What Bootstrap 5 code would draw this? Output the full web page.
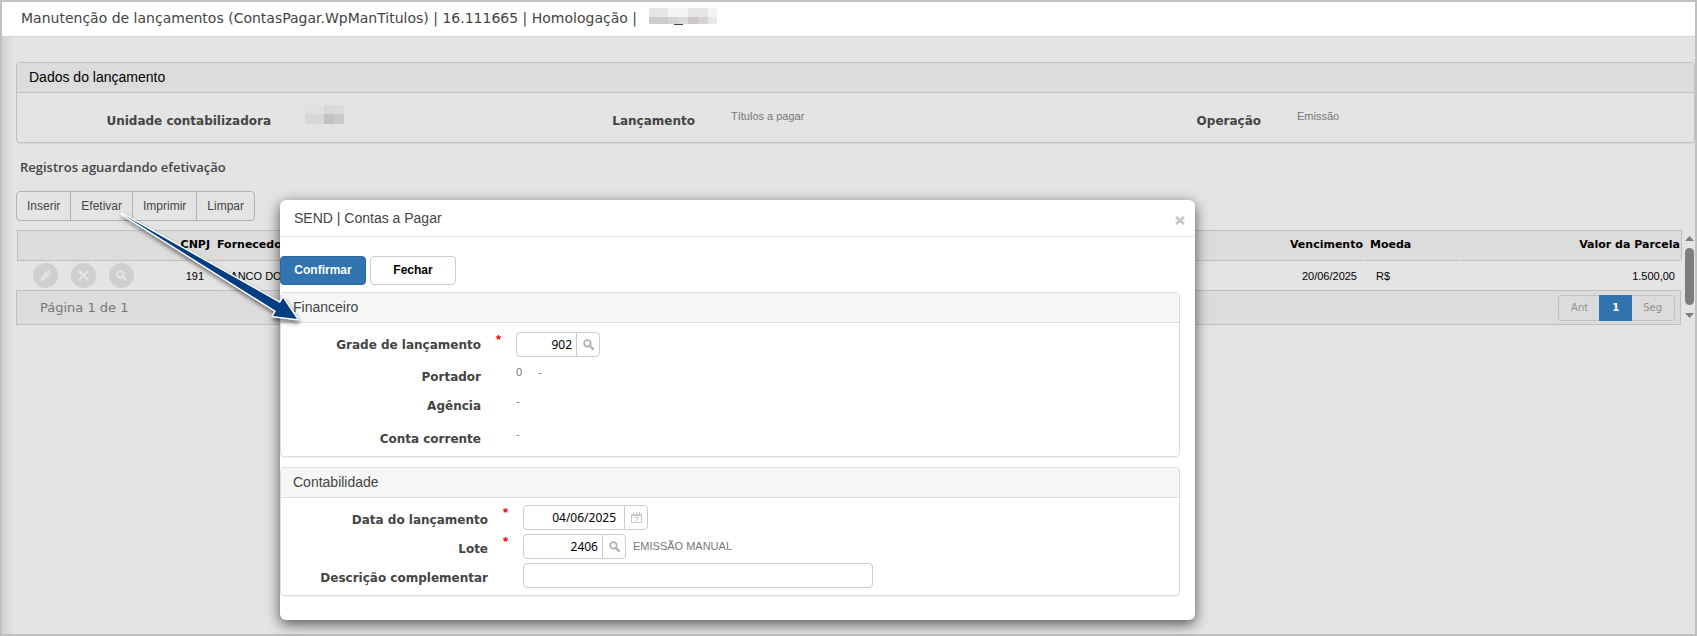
<!DOCTYPE html>
<html lang="pt-BR">
<head>
<meta charset="utf-8">
<meta name="viewport" content="width=device-width, initial-scale=1">
<title>Manutenção de lançamentos</title>
<link rel="stylesheet" href="https://cdn.jsdelivr.net/npm/bootstrap@5.3.0/dist/css/bootstrap.min.css">
<style>
:root { --verd: "DejaVu Sans", sans-serif; --arial: "Liberation Sans", sans-serif; --blue: #3174af; }
body { font: 12px/16px var(--arial); color: #444; background: #e4e4e4; }
.app-frame { min-height: 100vh; border: 2px solid #c0c0c0; background: linear-gradient(90deg, #d2d2d2, #e4e4e4 12px); overflow: hidden; }
.app-title { font: 14px/20px var(--verd); color: #444; background: #fff; padding: 6px 19px 7px; border-bottom: 1px solid #d2d2d2; height: 35px; white-space: nowrap; }
.redact { display: inline-block; vertical-align: top; }
.work { padding: 25px 0 0 14px; }
.panel { border: 1px solid #c0c0c0; border-radius: 4px; box-shadow: 0 1px 1px rgba(0,0,0,.06); }
.panel-title { font: 14px/20px var(--arial); padding: 4px 12px 5px; border-bottom: 1px solid #c0c0c0; margin: 0; color: #000; background: #dcdcdc; border-radius: 3px 3px 0 0; }
.lbl { font: bold 12px/20px var(--verd); color: #444; text-align: right; }
.val { font: 11px/16px var(--arial); color: #777; }
.val-after { padding: 4px 0 0 7px; }
.data-grid { display: grid; grid-template-columns: 254fr 200fr 224fr 300fr 266fr 433fr; padding: 12px 0 11px; }
.data-grid .lbl { padding-top: 6px; }
.data-grid .val { padding: 3px 0 0 36px; }
.data-grid .val-redact { padding: 0 0 0 34px; }
.section-title { font: 600 13px/20px "Open Sans", sans-serif; margin: 14px 0 14px 4px; color: #444; }
.tool .btn { --bs-btn-font-size: 12px; --bs-btn-line-height: 20px; --bs-btn-padding-y: 4px; --bs-btn-padding-x: 10px; --bs-btn-border-color: #b2b2b2; --bs-btn-color: #444; --bs-btn-hover-border-color: #b2b2b2; --bs-btn-hover-color: #000; --bs-btn-border-radius: 4px; }
.list-wrap { margin-top: 9px; }
.list-main { flex: 1 1 0; min-width: 0; }
.grid-tbl { width: 100%; table-layout: fixed; border-collapse: separate; border-spacing: 0; font-size: 11px; color: #000; white-space: nowrap; border-left: 1px solid #e4e4e4; }
.grid-tbl th { font: bold 11px/16px var(--verd); height: 31px; border-top: 1px solid #c0c0c0; padding: 0 1px 2px 6px; background: linear-gradient(#eee,#eee) right bottom/1px 1px no-repeat, linear-gradient(#c0c0c0,#c0c0c0) bottom/100% 1px no-repeat, #dcdcdc; }
.grid-tbl th:first-child { border-left: 1px solid #c0c0c0; }
.grid-tbl th:last-child { border-right: 1px solid #c0c0c0; }
.grid-tbl td { height: 29px; padding: 0 7px 0 12px; }
.grid-tbl td.act { padding: 0; }
.round { width: 25px; height: 25px; border: 0; border-radius: 50%; background: #cfcfcf; padding: 0; display: flex; align-items: center; justify-content: center; margin-left: 16px; position: relative; }
.pager { border: 1px solid #c0c0c0; background: #dcdcdc; height: 35px; padding: 0 5px 0 23px; font: 13px/20px var(--verd); color: #777; margin-right: 1px; }
.pagination { --bs-pagination-font-size: 10px; --bs-pagination-padding-x: 12px; --bs-pagination-padding-y: 4px; --bs-pagination-bg: transparent; --bs-pagination-border-color: #c0c0c0; --bs-pagination-color: #909090; --bs-pagination-active-bg: var(--blue); --bs-pagination-active-border-color: var(--blue); --bs-pagination-border-radius: 4px; line-height: 16px; }
.pagination .page-item:first-child .page-link { border-right: 0; }
.pagination .page-item:last-child .page-link { border-left: 0; }
.dlg { position: absolute; left: 280px; top: 200px; width: 53.9%; background: #fff; border-radius: 6px; box-shadow: 0 4px 14px rgba(0,0,0,.65); padding-bottom: 24px; }
.dlg-head { height: 37px; border-bottom: 1px solid #e5e5e5; padding: 0 10px 0 14px; }
.dlg-head h1 { font: 14px/20px var(--arial); margin: 0; }
.dlg-close { border: 0; background: none; padding: 0; display: flex; }
.dlg .panel { border-color: #ddd; margin-right: 15px; }
.dlg .panel-title { border-color: #ddd; background: #f6f6f6; color: #444; }
.dlg .panel + .panel { margin-top: 10px; }
.dlg-btns { padding: 19px 0 7px; gap: 4px; }
.dlg-btns .btn { width: 86px; --bs-btn-font-size: 12px; --bs-btn-font-weight: bold; --bs-btn-line-height: 19px; --bs-btn-padding-y: 4px; --bs-btn-padding-x: 0; --bs-btn-border-radius: 4px; }
.btn-ok { --bs-btn-bg: var(--blue); --bs-btn-color: #fff; --bs-btn-border-color: #2a679e; --bs-btn-hover-bg: #2a679e; --bs-btn-hover-color: #fff; }
.btn-no { --bs-btn-bg: #fff; --bs-btn-color: #000; --bs-btn-border-color: #ccc; --bs-btn-hover-border-color: #999; }
.form-rows { display: grid; }
.fin { grid-template: 32px 29px 33px 30px / 200px 35px 1fr; padding-top: 9px; }
.fin .lbl { padding-top: 3px; }
.cont { grid-template: 29px 29px 32px / 207px 35px 1fr; padding-top: 7px; }
.cont .lbl { padding-top: 5px; }
.req { font: bold 13px/16px var(--arial); color: #f00; padding-left: 15px; }
.fld .form-control { font: 12px/16px "Noto Sans", sans-serif; color: #000; height: 25px; min-height: 0; padding: 0 4px; border-color: #ccc; border-radius: 4px; text-align: right; flex: none; }
.fld .btn { width: 24px; height: 25px; padding: 0; --bs-btn-border-color: #ccc; border-radius: 4px; display: flex; align-items: center; justify-content: center; }
.fld .form-control.w-code { width: 61px; }
.fld .form-control.w-date { width: 102px; padding-right: 8px; }
.fld .form-control.w-lot { width: 80px; }
.fld .form-control.w-desc { width: 350px; text-align: left; }
.lens-grey { color: #b0b0b0; }
.lens-light { color: #e6e6e6; }
.arrow { position: absolute; left: 110px; top: 205px; pointer-events: none; filter: drop-shadow(1px 3px 2px rgba(0,0,0,.5)); }
</style>
</head>
<body>
<svg class="d-none">
  <symbol id="lens" viewBox="0 0 10 10"><circle cx="4" cy="4" r="3" fill="none" stroke="currentColor" stroke-width="1.6"/><path d="M6.3 6.3 9 9" stroke="currentColor" stroke-width="2" stroke-linecap="round"/></symbol>
</svg>
<div class="app-frame">
  <header class="app-title">Manutenção de lançamentos (ContasPagar.WpManTitulos) | 16.111665 | Homologação |
    <svg class="redact ms-2" width="68" height="18" shape-rendering="crispEdges"><path fill="#e6e6e6" d="M0 0h19v9H0zM39 0h20v9H39z"/><path fill="#f3f3f3" d="M19 0h20v9H19zM59 0h9v9h-9z"/><path fill="#ccc" d="M0 9h19v7H0z"/><path fill="#d4d4d4" d="M19 9h10v7H19zM49 9h10v7H49z"/><path fill="#dadcdc" d="M29 9h10v7H29z"/><path fill="#cbc5c7" d="M39 9h10v7H39z"/><path fill="#e8e8e8" d="M59 9h9v7h-9z"/><path fill="#444" d="M25 16h9v1h-9z"/></svg>
  </header>
  <main class="work">
    <section class="panel">
      <h2 class="panel-title">Dados do lançamento</h2>
      <div class="data-grid">
        <div class="lbl">Unidade contabilizadora</div>
        <div class="val val-redact"><svg class="redact" width="39" height="19" shape-rendering="crispEdges"><path fill="#dfdfdf" d="M0 0h9v9H0z"/><path fill="#e2e2e0" d="M9 0h10v9H9z"/><path fill="#d8d8d8" d="M19 0h10v9H19zM0 9h19v10H0z"/><path fill="#dbdbdd" d="M29 0h10v9H29z"/><path fill="#c5c3c1" d="M19 9h10v10H19z"/><path fill="#c9cacc" d="M29 9h10v10H29z"/></svg></div>
        <div class="lbl">Lançamento</div>
        <div class="val">Títulos a pagar</div>
        <div class="lbl">Operação</div>
        <div class="val">Emissão</div>
      </div>
    </section>
    <h2 class="section-title">Registros aguardando efetivação</h2>
    <div class="btn-group tool d-inline-flex align-top" role="group">
      <button type="button" class="btn">Inserir</button><button type="button" class="btn">Efetivar</button><button type="button" class="btn">Imprimir</button><button type="button" class="btn">Limpar</button>
    </div>
    <div class="list-wrap d-flex">
      <div class="list-main">
        <table class="grid-tbl">
          <colgroup><col style="width:38px"><col style="width:38px"><col style="width:38px"><col style="width:80px"><col><col style="width:163px"><col style="width:97px"><col style="width:221px"></colgroup>
          <thead><tr><th></th><th></th><th></th><th class="text-end">CNPJ</th><th>Fornecedor</th><th class="text-end">Vencimento</th><th>Moeda</th><th class="text-end">Valor da Parcela</th></tr></thead>
          <tbody><tr>
            <td class="act"><button class="round" type="button" aria-label="Editar"><svg width="13" height="13" viewBox="0 0 13 13"><path fill="#e6e6e6" d="m1.500 11.500.7-3.500L7 2.500 10.500 6 5 11zM7.800 1.800l.8-.8q.6-.5 1.200 0l2.200 2.200q.5.6 0 1.200l-.8.800z"/><path stroke="#cfcfcf" stroke-width=".8" d="M4 9.200 8.200 5"/></svg></button></td>
            <td class="act"><button class="round" type="button" aria-label="Excluir"><svg width="11" height="11" viewBox="0 0 11 11"><path stroke="#e6e6e6" stroke-width="2" stroke-linecap="round" d="m1.500 1.500 8 8m0-8-8 8"/></svg></button></td>
            <td class="act"><button class="round lens-light" type="button" aria-label="Consultar"><svg width="11" height="11"><use href="#lens"/></svg></button></td>
            <td class="text-end">191</td><td>BANCO DO</td><td class="text-end">20/06/2025</td><td>R$</td><td class="text-end">1.500,00</td>
          </tr></tbody>
        </table>
        <div class="pager d-flex align-items-center justify-content-between">
          <span>Página 1 de 1</span>
          <ul class="pagination m-0">
            <li class="page-item"><a class="page-link" href="#">Ant</a></li>
            <li class="page-item active"><a class="page-link fw-bold" href="#">1</a></li>
            <li class="page-item"><a class="page-link" href="#">Seg</a></li>
          </ul>
        </div>
      </div>
      <svg class="flex-shrink-0" width="13" height="95"><path fill="#7d7d7d" d="M3 11 7.500 6 12 11zM3 83l4.500 5L12 83z"/><rect x="3" y="18" width="9" height="57" rx="4.500" fill="#7d7d7d"/></svg>
    </div>
  </main>
</div>

<div class="dlg" role="dialog" aria-labelledby="dlgTitle">
  <div class="dlg-head d-flex align-items-center justify-content-between">
    <h1 id="dlgTitle">SEND | Contas a Pagar</h1>
    <button class="dlg-close mt-1" type="button" aria-label="Fechar janela"><svg width="10" height="9" viewBox="0 0 10 9"><path stroke="#c6c6c6" stroke-width="2.400" d="m1 1 8 7m0-7L1 8"/></svg></button>
  </div>
  <div class="dlg-btns d-flex">
    <button type="button" class="btn btn-ok">Confirmar</button><button type="button" class="btn btn-no">Fechar</button>
  </div>
  <section class="panel">
    <h2 class="panel-title">Financeiro</h2>
    <div class="form-rows fin">
      <label class="lbl" for="grade">Grade de lançamento</label><span class="req">*</span>
      <div class="input-group fld"><input id="grade" class="form-control w-code" value="902"><button class="btn lens-grey" type="button" aria-label="Buscar grade"><svg width="11" height="11"><use href="#lens"/></svg></button></div>
      <div class="lbl">Portador</div><span></span><div class="val">0<span class="ms-3">-</span></div>
      <div class="lbl">Agência</div><span></span><div class="val">-</div>
      <div class="lbl">Conta corrente</div><span></span><div class="val">-</div>
    </div>
  </section>
  <section class="panel">
    <h2 class="panel-title">Contabilidade</h2>
    <div class="form-rows cont">
      <label class="lbl" for="data">Data do lançamento</label><span class="req">*</span>
      <div class="input-group fld"><input id="data" class="form-control w-date" value="04/06/2025"><button class="btn" type="button" aria-label="Abrir calendário"><svg width="11" height="11" viewBox="0 0 11 11" fill="none" stroke="#c8c8c8"><path d="M.5 2.500h10v8H.5z"/><path stroke-width="2" d="M0 3h11"/><path d="M2.500 0v2M5.500 0v2M8.500 0v2M4 5.500h3L5.300 9"/></svg></button></div>
      <label class="lbl" for="lote">Lote</label><span class="req">*</span>
      <div class="d-flex"><div class="input-group fld w-auto flex-nowrap"><input id="lote" class="form-control w-lot" value="2406"><button class="btn lens-grey" type="button" aria-label="Buscar lote"><svg width="11" height="11"><use href="#lens"/></svg></button></div><span class="val val-after">EMISSÃO MANUAL</span></div>
      <label class="lbl" for="desc">Descrição complementar</label><span></span>
      <div class="fld"><input id="desc" class="form-control w-desc"></div>
    </div>
  </section>
</div>
<svg class="arrow" width="200" height="130"><path fill="#023e80" stroke="#fff" stroke-width="3" stroke-linejoin="round" paint-order="stroke" d="M12 9 170 98l3-5 14 21-24-3 3-5z"/></svg>
<script src="https://cdn.jsdelivr.net/npm/bootstrap@5.3.0/dist/js/bootstrap.bundle.min.js"></script>
</body>
</html>
